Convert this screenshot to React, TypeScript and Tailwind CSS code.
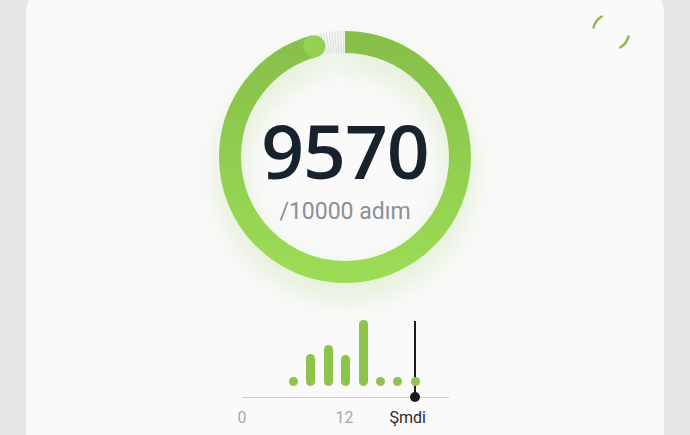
import React from 'react';

const R = 115;
const CX = 130;
const CY = 130;
const GOAL = 10000;
const STEPS = 9570;

// bar heights in px above the bar baseline
const bars = [9, 32, 41, 31, 66, 9, 9, 9];

function polar(angleDeg: number, r: number) {
  const a = ((angleDeg - 90) * Math.PI) / 180;
  return { x: CX + r * Math.cos(a), y: CY + r * Math.sin(a) };
}

function StepRing() {
  const circ = 2 * Math.PI * R;
  const done = STEPS / GOAL;
  const endAngle = done * 360;
  const cap = polar(endAngle, R);

  // hatch lines in the unfinished gap
  const hatch: React.ReactNode[] = [];
  for (let a = endAngle + 3; a < 360; a += 1.3) {
    const p1 = polar(a, R - 11);
    const p2 = polar(a, R + 11);
    hatch.push(
      <line key={a} x1={p1.x} y1={p1.y} x2={p2.x} y2={p2.y} stroke="#d6d6d6" strokeWidth={0.8} />
    );
  }

  return (
    <div className="grid place-items-center">
      <svg
        width="260"
        height="260"
        viewBox="0 0 260 260"
        className="[grid-area:1/1] drop-shadow-[0_14px_14px_rgba(140,200,70,0.25)]"
      >
        <defs>
          <linearGradient id="ring" gradientUnits="userSpaceOnUse" x1="250" y1="60" x2="10" y2="60">
            <stop offset="0" stopColor="#86bf49" />
            <stop offset="1" stopColor="#9cdc55" />
          </linearGradient>
        </defs>
        {hatch}
        <circle
          cx={CX}
          cy={CY}
          r={R}
          fill="none"
          stroke="url(#ring)"
          strokeWidth={22}
          strokeDasharray={`${circ * done} ${circ}`}
          transform={`rotate(-90 ${CX} ${CY})`}
        />
        <circle cx={cap.x} cy={cap.y} r={11} fill="url(#ring)" />
      </svg>
      <div className="[grid-area:1/1] flex flex-col items-center pt-[18px]">
        <span className="text-[75px] leading-[80px] font-semibold tracking-[-1px] text-[#17222e] font-['Open_Sans',sans-serif]">
          9570
        </span>
        <span className="text-[23px] leading-none text-[#8a9097] mt-[10px] font-['Roboto',sans-serif]">
          /10000 adım
        </span>
      </div>
    </div>
  );
}

function Spinner() {
  const arc = (a1: number, a2: number) => {
    const r = 18;
    const p = (a: number) => ({ x: 20 + r * Math.cos((a * Math.PI) / 180), y: 20 + r * Math.sin((a * Math.PI) / 180) });
    const s = p(a1);
    const e = p(a2);
    return `M ${s.x} ${s.y} A ${r} ${r} 0 0 1 ${e.x} ${e.y}`;
  };
  return (
    <svg width="40" height="40" viewBox="0 0 40 40" className="absolute right-[33px] top-[24px]">
      <path d={arc(-166, -121)} fill="none" stroke="#8ab84e" strokeWidth={2.4} strokeLinecap="round" />
      <path d={arc(14, 59)} fill="none" stroke="#8ab84e" strokeWidth={2.4} strokeLinecap="round" />
    </svg>
  );
}

function HourChart() {
  return (
    <div className="flex flex-col items-center font-['Roboto',sans-serif]">
      <div className="relative w-[207px] h-[77px] border-b border-[#cfcfcf]">
        {/* current time marker */}
        <div className="absolute left-[172px] top-0 bottom-0 w-[2px] bg-[#1b1b1b]" />
        <div className="relative flex items-end gap-[8.4px] pl-[47.5px] h-full pb-[11px]">
          {bars.map((h, i) => (
            <div key={i} className="w-[9px] rounded-full bg-[#8cc44c]" style={{ height: h }} />
          ))}
        </div>
        <div className="absolute left-[168px] bottom-[-5px] w-[10px] h-[10px] rounded-full bg-[#1b1b1b]" />
      </div>
      <div className="flex w-[207px] mt-[12px] text-[16px] leading-none">
        <span className="ml-[-4px] text-[#a8a8a8]">0</span>
        <span className="ml-[89px] text-[#a8a8a8]">12</span>
        <span className="ml-[36px] text-[#2a2a2a]">Şmdi</span>
      </div>
    </div>
  );
}

export default function App() {
  return (
    <div className="w-[690px] h-[435px] overflow-hidden bg-[#e6e6e6]">
      <div className="relative mx-[26px] mt-[-12px] h-[480px] rounded-[24px] bg-[#fafafa] flex flex-col items-center pt-[39px]">
        <Spinner />
        <StepRing />
        <div className="mt-[34px]">
          <HourChart />
        </div>
      </div>
    </div>
  );
}
